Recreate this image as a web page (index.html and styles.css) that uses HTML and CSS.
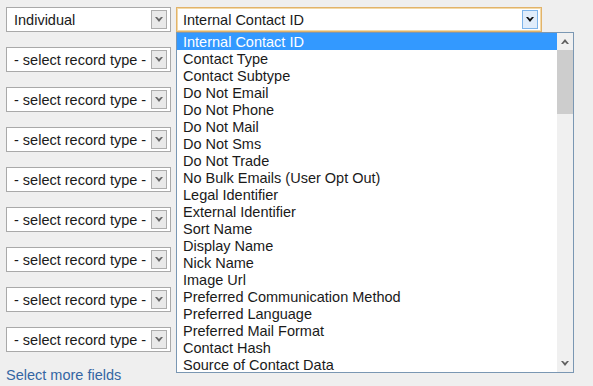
FILE: index.html
```html
<!DOCTYPE html>
<html lang="en">

<head>
    <meta charset="UTF-8">
    <title>Select fields</title>
    <link rel="stylesheet" href="styles.css">
</head>

<body class="main">
    <div class="mapper">
        <!-- columna de tipos -->
        <div class="mapper__types">
            <div class="sel">Individual<span class="sel__btn"><svg width="8" height="5" viewBox="0 0 8 5"><path d="M0 0h2l2 2 2-2h2L4 5z" fill="#666"/></svg></span></div>
            <div class="sel">- select record type -<span class="sel__btn"><svg width="8" height="5" viewBox="0 0 8 5"><path d="M0 0h2l2 2 2-2h2L4 5z" fill="#666"/></svg></span></div>
            <div class="sel">- select record type -<span class="sel__btn"><svg width="8" height="5" viewBox="0 0 8 5"><path d="M0 0h2l2 2 2-2h2L4 5z" fill="#666"/></svg></span></div>
            <div class="sel">- select record type -<span class="sel__btn"><svg width="8" height="5" viewBox="0 0 8 5"><path d="M0 0h2l2 2 2-2h2L4 5z" fill="#666"/></svg></span></div>
            <div class="sel">- select record type -<span class="sel__btn"><svg width="8" height="5" viewBox="0 0 8 5"><path d="M0 0h2l2 2 2-2h2L4 5z" fill="#666"/></svg></span></div>
            <div class="sel">- select record type -<span class="sel__btn"><svg width="8" height="5" viewBox="0 0 8 5"><path d="M0 0h2l2 2 2-2h2L4 5z" fill="#666"/></svg></span></div>
            <div class="sel">- select record type -<span class="sel__btn"><svg width="8" height="5" viewBox="0 0 8 5"><path d="M0 0h2l2 2 2-2h2L4 5z" fill="#666"/></svg></span></div>
            <div class="sel">- select record type -<span class="sel__btn"><svg width="8" height="5" viewBox="0 0 8 5"><path d="M0 0h2l2 2 2-2h2L4 5z" fill="#666"/></svg></span></div>
            <div class="sel">- select record type -<span class="sel__btn"><svg width="8" height="5" viewBox="0 0 8 5"><path d="M0 0h2l2 2 2-2h2L4 5z" fill="#666"/></svg></span></div>
            <a class="more" href="#">Select more fields</a>
        </div>

        <!-- campo abierto -->
        <div class="mapper__field">
            <div class="sel sel--open">Internal Contact ID<span class="sel__btn sel__btn--open"><svg width="8" height="5" viewBox="0 0 8 5"><path d="M0 0h2l2 2 2-2h2L4 5z" fill="#111"/></svg></span></div>

            <div class="list">
                <ul class="list__items">
                    <li class="list__item list__item--active">Internal Contact ID</li>
                    <li class="list__item">Contact Type</li>
                    <li class="list__item">Contact Subtype</li>
                    <li class="list__item">Do Not Email</li>
                    <li class="list__item">Do Not Phone</li>
                    <li class="list__item">Do Not Mail</li>
                    <li class="list__item">Do Not Sms</li>
                    <li class="list__item">Do Not Trade</li>
                    <li class="list__item">No Bulk Emails (User Opt Out)</li>
                    <li class="list__item">Legal Identifier</li>
                    <li class="list__item">External Identifier</li>
                    <li class="list__item">Sort Name</li>
                    <li class="list__item">Display Name</li>
                    <li class="list__item">Nick Name</li>
                    <li class="list__item">Image Url</li>
                    <li class="list__item">Preferred Communication Method</li>
                    <li class="list__item">Preferred Language</li>
                    <li class="list__item">Preferred Mail Format</li>
                    <li class="list__item">Contact Hash</li>
                    <li class="list__item">Source of Contact Data</li>
                </ul>
                <div class="scroll">
                    <span class="scroll__arrow"><svg width="8" height="5" viewBox="0 0 8 5"><path d="M0 5h2l2-2 2 2h2L4 0z" fill="#606060"/></svg></span>
                    <span class="scroll__thumb"></span>
                    <span class="scroll__track"></span>
                    <span class="scroll__arrow"><svg width="8" height="5" viewBox="0 0 8 5"><path d="M0 0h2l2 2 2-2h2L4 5z" fill="#606060"/></svg></span>
                </div>
            </div>
        </div>
    </div>
</body>

</html>
```

FILE: styles.css
```css
* {
    padding: 0;
    margin: 0;
    box-sizing: border-box;
}

/* Main */
.main {
    background-color: #efefef;
    font-family: "Liberation Sans", Arial, sans-serif;
    font-size: 14.5px;
    color: #1a1a1a;
}

.mapper {
    display: flex;
    gap: 5px;
    padding: 7px 0 0 6px;
}

.mapper__types {
    display: flex;
    flex-direction: column;
    gap: 15px;
    width: 165px;
}

.mapper__field {
    position: relative;
    width: 366px;
}

/* Selects */
.sel {
    position: relative;
    display: flex;
    align-items: center;
    height: 25px;
    padding-left: 7px;
    background-color: #fff;
    border: 1px solid #a9a9a9;
    white-space: nowrap;
}

.sel__btn {
    position: absolute;
    right: 3px;
    top: 2px;
    display: flex;
    align-items: center;
    justify-content: center;
    width: 16px;
    height: 19px;
    background-color: #e9e9e9;
    border: 1px solid #adadad;
}

.sel--open {
    padding-left: 6px;
    border-color: #e2b36a;
    box-shadow: inset 0 0 0 1px #f2d9a8;
}

.sel__btn--open {
    background-color: #e1edfb;
    border-color: #7eb4ea;
}

.more {
    margin-top: 0;
    color: #3466a3;
    text-decoration: none;
}

/* Lista abierta */
.list {
    position: absolute;
    left: 0;
    top: 25px;
    display: flex;
    width: 398px;
    height: 341px;
    background-color: #fff;
    border: 1px solid #7a97b3;
}

.list__items {
    flex: 1;
    list-style: none;
}

.list__item {
    height: 17px;
    line-height: 18px;
    padding-left: 6px;
    white-space: nowrap;
}

.list__item--active {
    background-color: #3399ff;
    color: #fff;
}

.scroll {
    display: flex;
    flex-direction: column;
    width: 16px;
    background-color: #f0f0f0;
}

.scroll__arrow {
    display: flex;
    align-items: center;
    justify-content: center;
    height: 17px;
}

.scroll__thumb {
    height: 64px;
    background-color: #cdcdcd;
}

.scroll__track {
    flex: 1;
}
```
